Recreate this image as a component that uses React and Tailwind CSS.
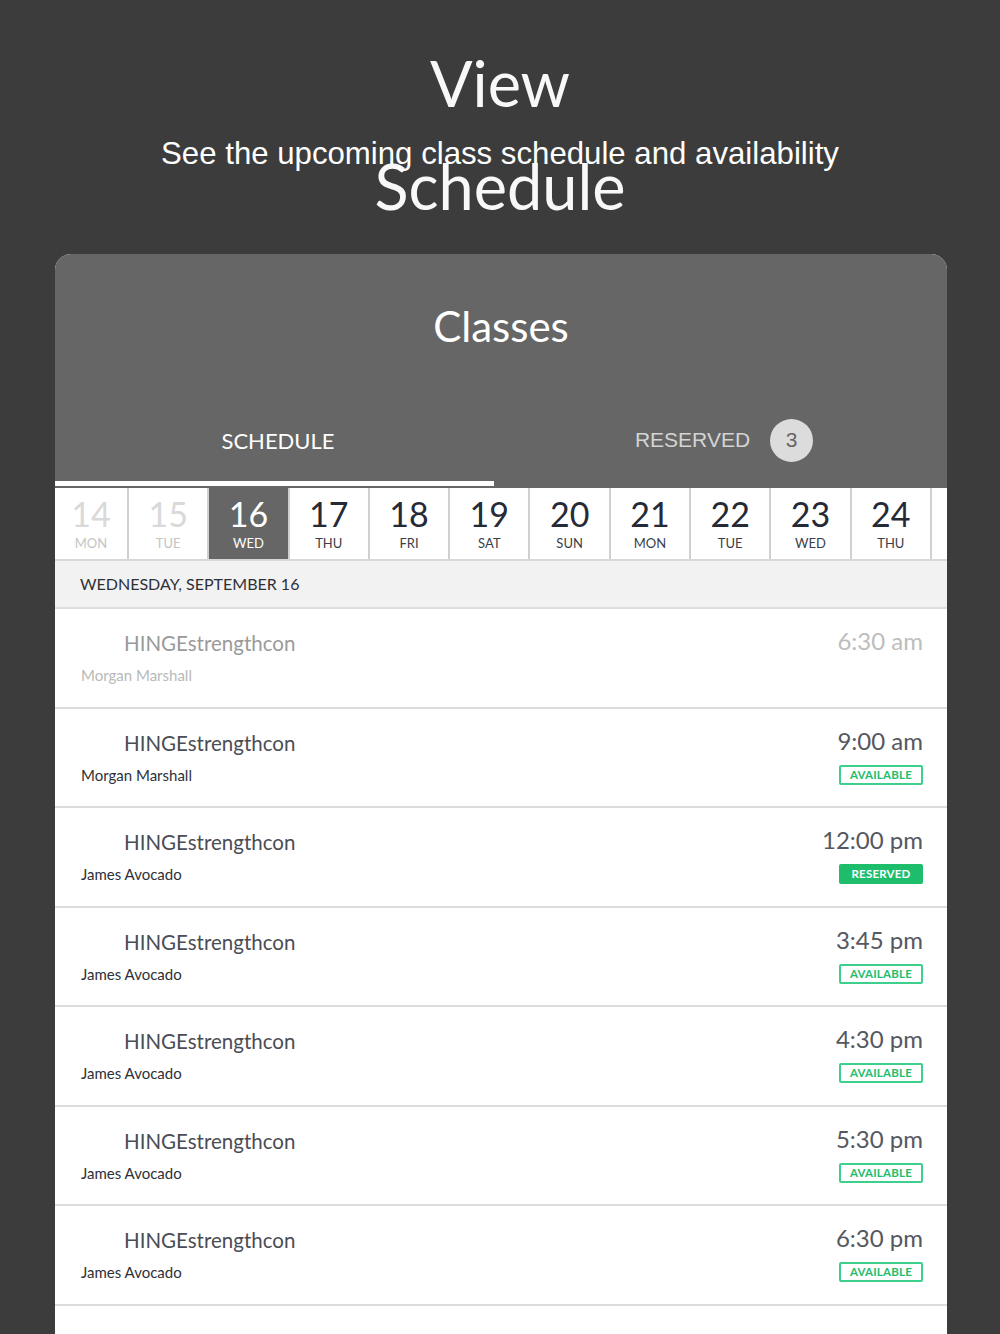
import React from "react";

const days = [
  { n: "14", d: "MON", past: true, w: "w-[74px]" },
  { n: "15", d: "TUE", past: true },
  { n: "16", d: "WED", active: true },
  { n: "17", d: "THU" },
  { n: "18", d: "FRI" },
  { n: "19", d: "SAT" },
  { n: "20", d: "SUN" },
  { n: "21", d: "MON" },
  { n: "22", d: "TUE" },
  { n: "23", d: "WED" },
  { n: "24", d: "THU" },
  { n: "25", d: "FRI" },
];

const rows = [
  { who: "Morgan Marshall", time: "6:30 am", past: true },
  { who: "Morgan Marshall", time: "9:00 am", status: "available" },
  { who: "James Avocado", time: "12:00 pm", status: "reserved" },
  { who: "James Avocado", time: "3:45 pm", status: "available" },
  { who: "James Avocado", time: "4:30 pm", status: "available" },
  { who: "James Avocado", time: "5:30 pm", status: "available" },
  { who: "James Avocado", time: "6:30 pm", status: "available" },
];

export default function App() {
  return (
    <div className="min-h-screen bg-[#3c3c3c] font-['Lato','Noto_Sans',sans-serif] overflow-hidden">
      <div className="relative h-[254px]">
        <h1 className="pt-[31px] text-center text-[63px] leading-[103px] text-[#f8f8f8] font-normal">
          View
          <br />
          Schedule
        </h1>
        <p className="absolute left-0 right-0 top-[136px] text-center font-['Liberation_Sans',Arial,sans-serif] text-[31.2px] leading-[36px] text-white">
          See the upcoming class schedule and availability
        </p>
      </div>

      <div className="ml-[55px] w-[892px] rounded-t-[16px] overflow-hidden bg-white">
        {/* header */}
        <div className="bg-[#666666] h-[234px] flex flex-col">
          <div className="pt-[47px] text-center text-[42px] leading-[50px] text-white">Classes</div>
          <div className="mt-[64px] flex h-[50px]">
            <div className="flex-1 flex items-center justify-center text-[22px] text-white">SCHEDULE</div>
            <div className="flex-1 flex items-center justify-center gap-[20px]">
              <span className="font-['Liberation_Sans',Arial,sans-serif] text-[21px] text-[#d4d4d4]">RESERVED</span>
              <span className="w-[43px] h-[43px] rounded-full bg-[#dcdcdc] text-[#666] text-[21px] font-['Liberation_Sans',Arial,sans-serif] flex items-center justify-center">
                3
              </span>
            </div>
          </div>
          <div className="mt-auto mb-[2px] h-[5px] w-[439px] bg-white" />
        </div>

        {/* date strip */}
        <div className="flex h-[73px] border-b-2 border-[#d8d8d8] overflow-hidden">
          {days.map((x, i) => (
            <div
              key={i}
              className={`${x.w || "w-[80.3px]"} shrink-0 flex flex-col items-center border-r-2 border-[#d0d0d0] ${
                x.active ? "bg-[#666666] text-white" : x.past ? "text-[#d9d9d9]" : "text-[#262a36]"
              }`}
            >
              <div className="pt-[7px] text-[34px] leading-[38px]">{x.n}</div>
              <div
                className={`text-[13px] leading-[16px] mt-[2px] ${
                  x.active ? "text-white" : x.past ? "text-[#c4c4c4]" : "text-[#3a3e48]"
                }`}
              >
                {x.d}
              </div>
            </div>
          ))}
        </div>

        {/* date header */}
        <div className="h-[48px] bg-[#f2f2f2] border-b-2 border-[#dedede] flex items-center pl-[25px] text-[16px] text-[#2e3038]">
          WEDNESDAY, SEPTEMBER 16
        </div>

        {rows.map((r, i) => (
          <div key={i} className="h-[99.5px] border-b-2 border-[#dcdcdc] flex justify-between">
            <div className="pl-[26px] pt-[21px]">
              <div className={`ml-[43px] text-[20.5px] leading-[26px] ${r.past ? "text-[#9a9a9a]" : "text-[#4a4d55]"}`}>
                HINGEstrengthcon
              </div>
              <div className={`mt-[10px] text-[15px] leading-[18px] ${r.past ? "text-[#b9b9b9]" : "text-[#2e3038]"}`}>
                {r.who}
              </div>
            </div>
            <div className="pr-[24px] pt-[17px] flex flex-col items-end">
              <div className={`text-[24px] leading-[30px] ${r.past ? "text-[#bdbdbd]" : "text-[#555860]"}`}>{r.time}</div>
              {r.status === "available" && (
                <div className="mt-[9px] h-[20px] w-[84px] border-2 border-[#3dd08c] rounded-[2px] flex items-center justify-center text-[11.5px] font-bold tracking-[0.2px] text-[#1fbd6c]">
                  AVAILABLE
                </div>
              )}
              {r.status === "reserved" && (
                <div className="mt-[9px] h-[20px] w-[84px] bg-[#1dbd6c] rounded-[2px] flex items-center justify-center text-[11.5px] font-bold tracking-[0.2px] text-white">
                  RESERVED
                </div>
              )}
            </div>
          </div>
        ))}
        <div className="h-[60px] bg-white" />
      </div>
    </div>
  );
}
